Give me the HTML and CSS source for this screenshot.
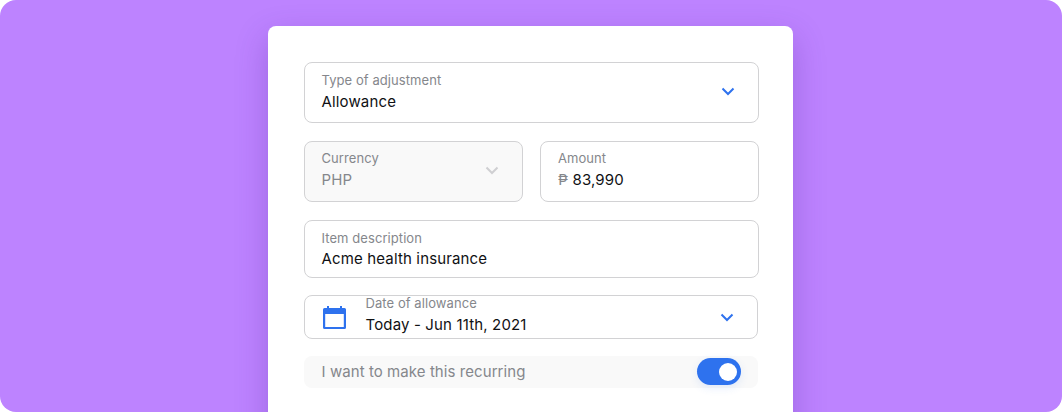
FILE: index.html
```html
<!DOCTYPE html>
<html lang="en">
<head>
<meta charset="utf-8">
<title>Adjustment form</title>
<link rel="stylesheet" href="styles.css">
</head>
<body>
<main class="stage">
  <form class="card">
    <div class="field field-tall field-first">
      <div class="field-text">
        <span class="label">Type of adjustment</span>
        <span class="value">Allowance</span>
      </div>
      <svg class="chevron" viewBox="0 0 14 9" width="14" height="9"><path d="M1.500 1.500 7 7l5.500-5.500" fill="none" stroke="currentColor" stroke-width="2"/></svg>
    </div>
    <div class="pair">
      <div class="field field-tall field-disabled">
        <div class="field-text">
          <span class="label">Currency</span>
          <span class="value">PHP</span>
        </div>
        <svg class="chevron" viewBox="0 0 14 9" width="14" height="9"><path d="M1.500 1.500 7 7l5.500-5.500" fill="none" stroke="currentColor" stroke-width="2"/></svg>
      </div>
      <div class="field field-tall field-amount">
        <div class="field-text">
          <span class="label">Amount</span>
          <span class="value"><span class="peso">₱</span> 83,990</span>
        </div>
      </div>
    </div>
    <div class="field field-item">
      <div class="field-text">
        <span class="label">Item description</span>
        <span class="value">Acme health insurance</span>
      </div>
    </div>
    <div class="field field-date">
      <svg class="calendar" viewBox="0 0 23 23" width="23" height="23"><path d="M4 0h2v2h11V0h2v2h2.500A1.500 1.500 0 0 1 23 3.500v18a1.500 1.500 0 0 1-1.500 1.500h-20A1.500 1.500 0 0 1 0 21.500v-18A1.500 1.500 0 0 1 1.500 2H4zM2.200 8v13h18.600V8z" fill="currentColor" fill-rule="evenodd"/></svg>
      <div class="field-text">
        <span class="label">Date of allowance</span>
        <span class="value">Today - Jun 11th, 2021</span>
      </div>
      <svg class="chevron" viewBox="0 0 14 9" width="14" height="9"><path d="M1.500 1.500 7 7l5.500-5.500" fill="none" stroke="currentColor" stroke-width="2"/></svg>
    </div>
    <div class="recurring">
      <span class="recurring-text">I want to make this recurring</span>
      <span class="toggle"><span class="knob"></span></span>
    </div>
  </form>
</main>
</body>
</html>
```
FILE: styles.css
```css
* { box-sizing: border-box; }
html, body { margin: 0; height: 412px; background: #fff; overflow: hidden; }
body { font-family: Inter, "Liberation Sans", sans-serif; }
.stage {
  width: 1062px;
  height: 412px;
  background: #bd83ff;
  border-radius: 16px;
  overflow: hidden;
  display: flex;
  justify-content: center;
  padding: 26px 2px 0 0;
}
.card {
  width: 525px;
  height: 420px;
  flex: none;
  background: #fff;
  border-radius: 8px;
  padding: 36px 34px 0 36px;
  box-shadow: 0 12px 32px rgba(76, 29, 149, 0.28);
  display: flex;
  flex-direction: column;
}
.field {
  display: flex;
  align-items: center;
  background: #fff;
  border: 1px solid #d2d2d4;
  border-radius: 8px;
  padding: 0 23px 0 17px;
}
.field-tall { height: 61px; padding-bottom: 3px; }
.field-first { padding-bottom: 2px; }
.field-text { flex: 1; display: flex; flex-direction: column; gap: 1.500px; min-width: 0; }
.label { font-size: 13px; line-height: 18px; letter-spacing: 0.07px; color: #85878c; }
.value { font-size: 15px; line-height: 22px; letter-spacing: 0.15px; color: #101114; }
.chevron { color: #2e72ee; flex: none; }
.pair {
  display: grid;
  grid-template-columns: 219px 218.500px;
  gap: 17.500px;
  margin-top: 18px;
}
.field-disabled { background: #f9f9f9; }
.field-disabled .value { color: #85878c; }
.field-disabled .chevron { color: #cfcfd2; }
.field-first .value { margin-top: 0.500px; }
.field-amount .value { margin-top: 1px; }
.peso { color: #85878c; }
.field-item { height: 57.500px; margin-top: 18px; padding-top: 1.500px; }
.field-date {
  height: 44px;
  margin-top: 17.500px;
  margin-right: 1px;
  padding-left: 18.500px;
  gap: 19.500px;
}
.field-date .label { line-height: 16px; }
.field-date .value { line-height: 24px; }
.field-date .field-text { margin-top: -2px; gap: 1.500px; }
.calendar { color: #2e72ee; flex: none; }
.recurring {
  height: 32px;
  margin-top: 17px;
  margin-right: 1px;
  background: #f9f9f9;
  border-radius: 8px;
  padding: 0 17px 0 18px;
  display: flex;
  align-items: center;
  justify-content: space-between;
}
.recurring-text { font-size: 15px; letter-spacing: 0.07px; color: #85878c; padding-bottom: 2px; }
.toggle {
  width: 44px;
  height: 27px;
  margin-bottom: 1px;
  border-radius: 13.500px;
  background: #2e72ee;
  display: flex;
  align-items: center;
  justify-content: flex-end;
  padding-right: 4px;
  box-shadow: 0 3px 8px rgba(46, 114, 238, 0.12);
}
.knob { width: 18px; height: 18px; border-radius: 50%; background: #fff; }
```
